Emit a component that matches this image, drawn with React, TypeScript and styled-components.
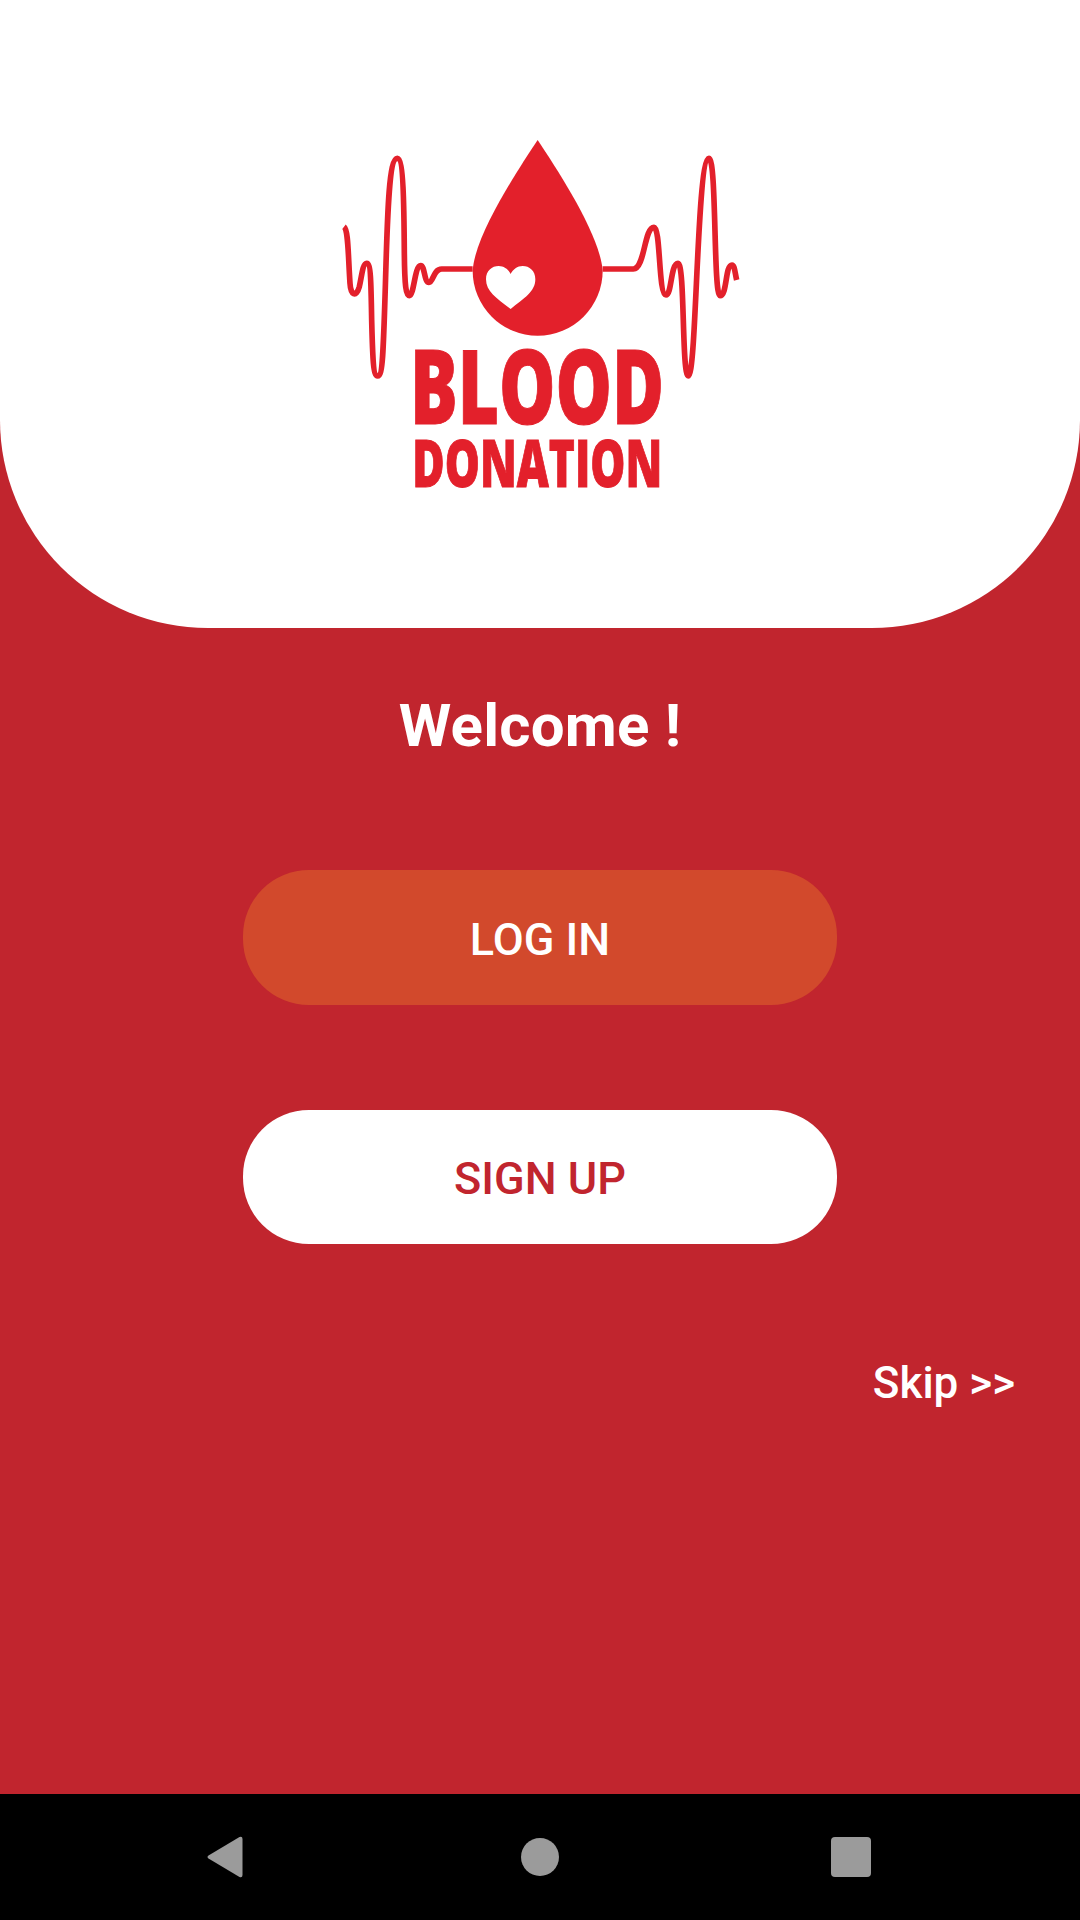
import React from 'react'
import styled, { createGlobalStyle } from 'styled-components'

const GlobalStyle = createGlobalStyle`
  html, body {
    margin: 0;
    padding: 0;
    background: #c1252e;
    font-family: Roboto, "Liberation Sans", sans-serif;
  }
`

const Logo = () => (
  <LogoSvg viewBox="0 0 1320 1140">
    <path
      d="M653 60C590 155 465 345 458 452A195 195 0 1 0 848 452C840 345 716 155 653 60Z"
      fill="#e3202b"
    />
    <path
      d="M572 567C530 535 498 515 498 478C498 452 516 438 536 438C552 438 565 448 572 462C579 448 592 438 608 438C628 438 646 452 646 478C646 515 612 535 572 567Z"
      fill="#fff"
    />
    <WavePath d="M72 320C85 330 84 400 90 490C92 525 108 535 118 500C125 470 128 430 140 430C152 430 153 480 155 600C158 720 160 768 173 768C188 768 190 700 196 500C202 300 205 115 232 115C250 115 252 250 253 400C254 500 258 527 268 527C282 527 284 437 302 437C315 437 312 487 327 487C340 487 340 447 365 447L458 447" />
    <WavePath d="M848 447L940 447C975 447 972 322 1002 322C1022 322 1015 525 1038 525C1055 525 1052 430 1074 430C1095 430 1085 768 1105 768C1130 768 1130 115 1167 115C1190 115 1180 527 1200 527C1222 527 1215 435 1236 435C1244 435 1245 460 1250 480" />
    <LogoWord x="270" y="911" fontSize="306" textLength="762" lengthAdjust="spacingAndGlyphs">
      BLOOD
    </LogoWord>
    <LogoWord x="277" y="1101" fontSize="198" textLength="750" lengthAdjust="spacingAndGlyphs">
      DONATION
    </LogoWord>
  </LogoSvg>
)

const App = () => {
  return (
    <Page>
      <GlobalStyle />
      <Header>
        <Logo />
      </Header>
      <Main>
        <Title>Welcome !</Title>
        <LoginButton>LOG IN</LoginButton>
        <SignUpButton>SIGN UP</SignUpButton>
        <SkipRow>
          <SkipLink>Skip &gt;&gt;</SkipLink>
        </SkipRow>
      </Main>
      <NavBar>
        <BackIcon viewBox="0 0 36 42">
          <path d="M33 1L2 19.500Q0 21 2 22.500L33 41Q36 42 36 39V3Q36 0 33 1Z" fill="#9b9b9b" />
        </BackIcon>
        <HomeIcon />
        <RecentIcon />
      </NavBar>
    </Page>
  )
}

const Page = styled.div`
  display: flex;
  flex-direction: column;
  width: 1080px;
  height: 1920px;
  overflow: hidden;
  background-color: #c1252e;
`

const Header = styled.header`
  display: flex;
  justify-content: center;
  box-sizing: border-box;
  height: 628px;
  padding-top: 120px;
  background-color: #fff;
  border-radius: 0 0 208px 208px;
`

const LogoSvg = styled.svg`
  width: 440px;
  height: 380px;
`

const WavePath = styled.path`
  fill: none;
  stroke: #e3202b;
  stroke-width: 17;
`

const LogoWord = styled.text`
  font-family: "Open Sans", sans-serif;
  font-weight: 800;
  fill: #e3202b;
  stroke: #e3202b;
  stroke-width: 3;
`

const Main = styled.main`
  flex: 1;
  display: flex;
  flex-direction: column;
  align-items: center;
  padding-top: 63px;
`

const Title = styled.h1`
  margin: 0;
  font-size: 60px;
  line-height: 70px;
  font-weight: 700;
  letter-spacing: 0.2px;
  color: #fff;
`

const PillButton = styled.button`
  display: block;
  width: 594px;
  border: none;
  border-radius: 66px;
  font-family: Roboto, sans-serif;
  font-size: 45px;
  font-weight: 500;
`

const LoginButton = styled(PillButton)`
  height: 135px;
  margin-top: 109px;
  padding: 4px 0 0;
  background-color: #d2492c;
  color: #fff;
`

const SignUpButton = styled(PillButton)`
  height: 134px;
  margin-top: 105px;
  padding: 3px 0 0;
  background-color: #fff;
  color: #c1252e;
`

const SkipRow = styled.div`
  align-self: stretch;
  display: flex;
  justify-content: flex-end;
  margin-top: 113px;
  padding-right: 65px;
`

const SkipLink = styled.a`
  font-size: 44px;
  line-height: 53px;
  font-weight: 500;
  color: #fff;
`

const NavBar = styled.nav`
  display: flex;
  align-items: center;
  height: 126px;
  background-color: #000;
`

const BackIcon = styled.svg`
  width: 37px;
  height: 42px;
  margin-left: 206px;
`

const HomeIcon = styled.span`
  width: 38px;
  height: 38px;
  margin-left: 278px;
  border-radius: 50%;
  background-color: #9b9b9b;
`

const RecentIcon = styled.span`
  width: 40px;
  height: 40px;
  margin-left: 272px;
  border-radius: 4px;
  background-color: #9b9b9b;
`

export default App
